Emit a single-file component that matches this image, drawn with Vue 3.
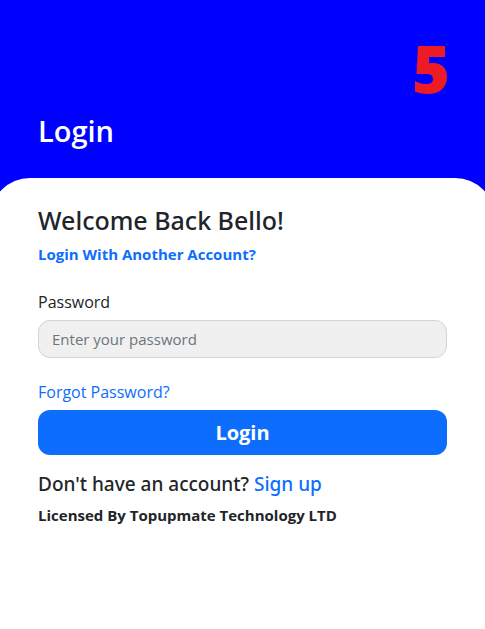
<script setup>
import { ref } from 'vue'
const password = ref('')
</script>

<template>
  <div class="page">
    <header class="hero">
      <svg class="logo" viewBox="0 0 32 48" role="img" aria-label="5">
        <path d="M3 0H30V11H14V17.5C25 15.5 32 21 32 31C32 42 24 48 13 48C8 48 3 47 0 45.5V35C3 37 7 38 11 38C16 38 18 36 18 33C18 29 15 28 11 28H1.5Z" />
      </svg>
      <h1>Login</h1>
    </header>
    <main class="sheet">
      <h2>Welcome Back Bello!</h2>
      <a class="switch" href="#">Login With Another Account?</a>
      <form @submit.prevent>
        <label for="password">Password</label>
        <input id="password" v-model="password" type="password" placeholder="Enter your password" />
        <a class="forgot" href="#">Forgot Password?</a>
        <button type="submit">Login</button>
      </form>
      <p class="signup">Don't have an account? <a href="#">Sign up</a></p>
      <p class="license">Licensed By Topupmate Technology LTD</p>
    </main>
  </div>
</template>

<style>
body { background: #fff; }
</style>

<style scoped>
* { box-sizing: border-box; }
.page { overflow: hidden; font-family: "Open Sans", "Noto Sans", sans-serif; color: #212529; font-size: 16px; }
.hero { display: flex; flex-direction: column; background: #00f; padding: 46px 38px 68px; }
.logo { width: 32px; height: 48px; align-self: flex-end; fill: #ed1c24; }
h1, h2, p { margin: 0; }
h1 { margin-top: 19px; color: #fff; font-size: 29px; line-height: 36px; font-weight: 600; }
.sheet { margin: -39px -10px 0; padding: 24px 48px; background: #fff; border-radius: 40px 40px 0 0; }
h2 { font-family: "Noto Sans", sans-serif; font-size: 25px; line-height: 36px; font-weight: 500; }
a { color: #0d6efd; text-decoration: none; }
.switch { display: block; margin-top: 4px; font-size: 15px; line-height: 24px; font-weight: 700; }
form { display: flex; flex-direction: column; margin-top: 24px; }
label { font-size: 16px; line-height: 24px; }
input { width: 100%; height: 38px; margin-top: 6px; padding: 0 13px; border: 1px solid #ced4da; border-radius: 12px; background: #f0f0f0; font: inherit; font-size: 15px; }
input::placeholder { color: #6c757d; opacity: 1; }
.forgot { align-self: flex-start; margin-top: 22px; font-size: 16px; line-height: 24px; }
button { height: 45px; margin-top: 6px; border: 0; border-radius: 12px; background: #0d6efd; color: #fff; font: inherit; font-size: 20px; font-weight: 700; }
.signup { font-family: "Noto Sans", sans-serif; margin-top: 16px; font-size: 19px; line-height: 26px; font-weight: 500; }
.license { margin-top: 6px; font-size: 15px; line-height: 24px; font-weight: 700; }
</style>
